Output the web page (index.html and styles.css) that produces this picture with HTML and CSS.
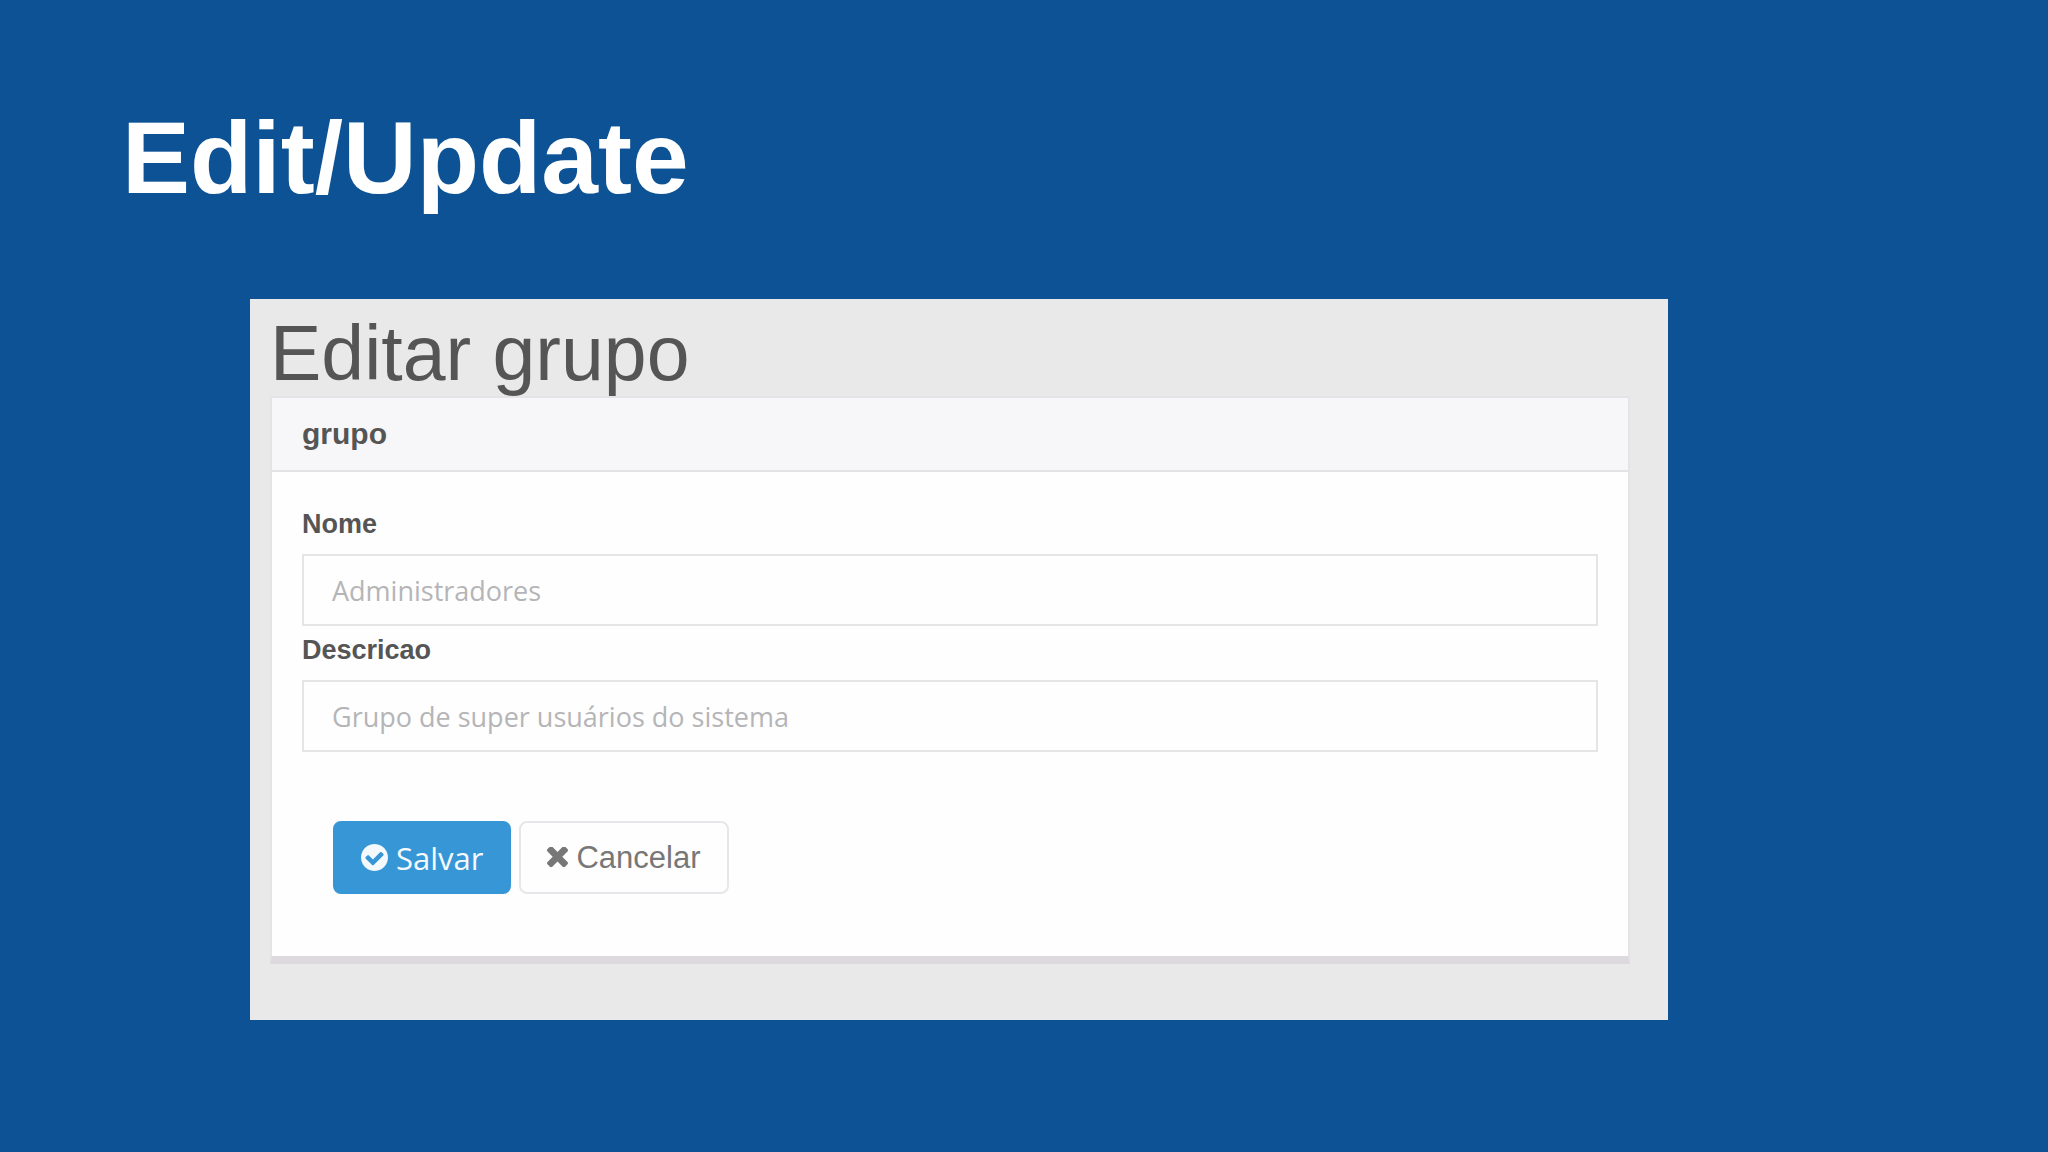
FILE: index.html
```html
<!DOCTYPE html>
<html lang="pt-br">
<head>
  <meta charset="UTF-8">
  <title>Edit/Update</title>
  <link rel="stylesheet" href="styles.css">
</head>
<body>
  <h1 class="slide-title">Edit/Update</h1>

  <main class="screen">
    <h2 class="page-title">Editar grupo</h2>

    <div class="panel">
      <div class="panel-header">grupo</div>
      <form class="panel-body" action="#" method="post">
        <label for="nome">Nome</label>
        <input type="text" id="nome" name="nome" placeholder="Administradores">
        <label for="descricao">Descricao</label>
        <input type="text" id="descricao" name="descricao" placeholder="Grupo de super usuários do sistema">

        <div class="actions">
          <button type="submit" class="btn btn-primary">
            <svg class="icon-check" viewBox="0 0 1536 1536" aria-hidden="true"><path fill="currentColor" d="M1284 606q0-28-18-46l-91-90q-19-19-45-19t-45 19L677 877 451 651q-19-19-45-19t-45 19l-91 90q-18 18-18 46 0 27 18 45l362 362q19 19 45 19 27 0 46-19l543-543q18-18 18-45zM1536 768q0 209-103 385.500T1153.500 1433 768 1536t-385.500-103T103 1153.500 0 768t103-385.500T382.500 103 768 0t385.500 103T1433 382.500 1536 768z"/></svg>
            Salvar
          </button>
          <button type="button" class="btn btn-default">
            <svg class="icon-times" viewBox="110 302 1188 1188" aria-hidden="true"><path fill="currentColor" d="M1298 1214q0 40-28 68l-136 136q-28 28-68 28t-68-28l-294-294-294 294q-28 28-68 28t-68-28l-136-136q-28-28-28-68t28-68l294-294-294-294q-28-28-28-68t28-68l136-136q28-28 68-28t68 28l294 294 294-294q28-28 68-28t68 28l136 136q28 28 28 68t-28 68l-294 294 294 294q28 28 28 68z"/></svg>
            Cancelar
          </button>
        </div>
      </form>
    </div>
  </main>
</body>
</html>
```
FILE: styles.css
```css
* {
  box-sizing: border-box;
}
body {
  margin: 0;
  padding: 96px 380px 132px 250px;
  background: #0c5294;
  color: #555;
  font-family: "Liberation Sans", Arial, sans-serif;
}
.slide-title {
  margin: 0 0 79px -128px;
  color: #fff;
  font-size: 102px;
  line-height: 124px;
}
.screen {
  padding: 12px 38px 56px 20px;
  background: #eae9ea;
}
.page-title {
  margin: 0;
  font-size: 77px;
  font-weight: normal;
  line-height: 85px;
}
.panel {
  background: #fefefe;
  border: 2px solid #e5e3e6;
  border-bottom: 8px solid #dcdade;
}
.panel-header {
  padding: 20px 30px;
  background: #f7f6f9;
  border-bottom: 2px solid #e4e2e5;
  font-size: 30px;
  font-weight: bold;
  line-height: 32px;
}
.panel-body {
  padding: 28px 30px 62px;
}
.panel-body label {
  display: block;
  padding: 8px 0 14px;
  font-size: 27px;
  font-weight: bold;
  line-height: 32px;
}
.panel-body input {
  display: block;
  width: 100%;
  height: 72px;
  padding: 0 28px;
  background: #fefefe;
  border: 2px solid #e5e4e7;
  color: #555;
  font-family: "Open Sans", sans-serif;
  font-size: 27px;
}
.panel-body input::placeholder {
  color: #b5b5b7;
  opacity: 1;
}
.actions {
  display: flex;
  gap: 8px;
  padding: 69px 31px 0;
}
.btn {
  display: flex;
  align-items: center;
  gap: 8px;
  height: 73px;
  padding: 0 26px;
  border: 2px solid #e8e6eb;
  border-radius: 8px;
  background: #fefefe;
  color: #777;
  font-family: "Liberation Sans", Arial, sans-serif;
  font-size: 31px;
  cursor: pointer;
}
.btn-primary {
  border-color: #3696d6;
  background: #3696d6;
  color: #f4f9fd;
  font-family: "Open Sans", sans-serif;
}
.icon-check {
  width: 27px;
  height: 27px;
}
.icon-times {
  width: 21px;
  height: 21px;
}
```
